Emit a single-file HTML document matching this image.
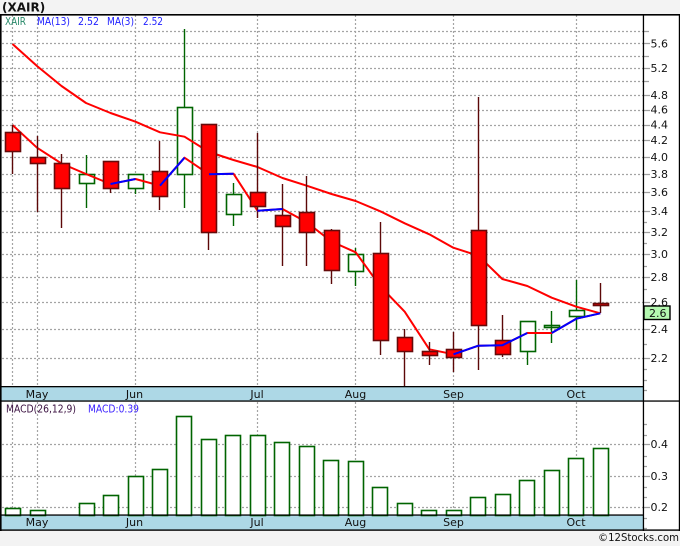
<!DOCTYPE html>
<html><head><meta charset="utf-8"><style>
html,body{margin:0;padding:0;background:#f3f3f3}
svg{display:block}
text{font-family:"DejaVu Sans",sans-serif;font-size:11px;fill:#111}
.g{stroke:#a4a4a4;stroke-width:1.2;stroke-dasharray:2 2;fill:none}
.t{stroke:#a0a0a0;stroke-width:1.2}
.rw{stroke:#5c0808;stroke-width:1.4}
.gw{stroke:#006400;stroke-width:1.4}
.rb{fill:#f00;stroke:#660a0a;stroke-width:1.6}
.gb{fill:none;stroke:#006400;stroke-width:1.6}
.mb{fill:#fff;stroke:#006400;stroke-width:1.6}
.rl{fill:none;stroke:#f00;stroke-width:2;stroke-linejoin:round}
.bl{fill:none;stroke:#00f;stroke-width:2;stroke-linejoin:round}
.lg{font-size:10.4px;fill:#22f}
</style></head><body>
<svg width="680" height="546" viewBox="0 0 680 546" xmlns="http://www.w3.org/2000/svg">
<rect width="680" height="546" fill="#f3f3f3"/>
<text x="2" y="11.5" style="font-weight:bold;font-size:12px;fill:#111">(XAIR)</text>
<rect x="1" y="15" width="678" height="515" fill="#fff"/>

<!-- bands -->
<rect x="1" y="387" width="642" height="14" fill="#add8e6"/>
<rect x="1" y="515" width="642" height="15" fill="#add8e6"/>

<!-- grid upper -->
<path class="g" d="M2 31.5H643M2 43.5H643M2 56.5H643M2 68.5H643M2 81.5H643M2 95.5H643M2 110.5H643M2 125.5H643M2 140.5H643M2 157.5H643M2 174.5H643M2 192.5H643M2 211.5H643M2 232.5H643M2 254.5H643M2 277.5H643M2 302.5H643M2 329.5H643M2 358.5H643"/>
<path class="g" d="M12.5 15V387M37.5 15V387M135.5 15V387M257.5 15V387M355.5 15V387M453.5 15V387M576.5 15V387"/>
<!-- grid lower -->
<path class="g" d="M2 444.5H643M2 476.5H643M2 507.5H643"/>
<path class="g" d="M12.5 402V515M37.5 402V515M135.5 402V515M257.5 402V515M355.5 402V515M453.5 402V515M576.5 402V515"/>

<!-- ticks -->
<path class="t" d="M643 31.5H649M643 43.5H650M643 56.5H649M643 68.5H650M643 81.5H649M643 95.5H650M643 110.5H650M643 125.5H650M643 140.5H650M643 157.5H650M643 174.5H650M643 192.5H650M643 211.5H650M643 222.5H647M643 232.5H650M643 243.5H647M643 254.5H650M643 266.5H647M643 277.5H650M643 289.5H647M643 302.5H650M643 329.5H650M643 344.5H647M643 358.5H650M643 369.5H647M643 380.5H647M643 390.5H647"/>
<path class="t" d="M643 424.5H647M643 435.5H647M643 444.5H650M643 456.5H647M643 466.5H647M643 476.5H650M643 487.5H647M643 497.5H647M643 507.5H650M643 518.5H647M643 528.5H647"/>

<!-- wicks green -->
<path class="gw" d="M86.5 155V208M135.5 174V194M184.5 29V208M233.5 183V226M355.5 248V286M527.5 351V365M551.5 311V343M576.5 280V330"/>
<!-- hollow bodies -->
<rect x="178" y="108" width="14" height="66" fill="#fff"/>
<rect x="80" y="175" width="14" height="8" fill="#fff"/>
<rect x="129" y="175" width="14" height="13" fill="#fff"/>
<rect x="227" y="195" width="14" height="19" fill="#fff"/>
<rect x="349" y="255" width="14" height="16" fill="#fff"/>
<rect x="521" y="322" width="14" height="29" fill="#fff"/>
<rect x="570" y="311" width="14" height="5" fill="#fff"/>
<rect class="gb" x="79.5" y="174.5" width="15" height="9"/>
<rect class="gb" x="128.5" y="174.5" width="15" height="14"/>
<rect class="gb" x="177.5" y="107.5" width="15" height="67"/>
<rect class="gb" x="226.5" y="194.5" width="15" height="20"/>
<rect class="gb" x="348.5" y="254.5" width="15" height="17"/>
<rect class="gb" x="520.5" y="321.5" width="15" height="30"/>
<rect class="gb" x="544.5" y="325.5" width="15" height="2"/>
<rect class="gb" x="569.5" y="310.5" width="15" height="6"/>

<!-- MA lines red -->
<polyline class="rl" points="12.5,44 37,66 61.5,86 86,103 110.5,113 135.5,121.7 160,132.3 184.5,136.7 209,152 233.5,160 257.5,167 282.5,178 306.7,185.7 331.5,194 355.7,201 380.3,211.3 404.7,223.3 429.3,234.3 453.3,247.7 478.3,255.7 502.3,279 527.3,286 551.7,297.7 576.3,306.7 600.3,313.3"/>
<polyline class="rl" points="12.5,125 37,147.7 61.5,163.5 86,174 110.5,184 135.5,179 160,185.7 184.5,157.7 209,174.3 233.5,173.7 257.5,210.7 282.5,209 306.7,222.3 331.5,241.5 355.7,252.3 380.3,286.3 404.7,311.7 429.3,349.3 453.5,354.3 478.3,345.7 502.3,345.3 527.3,333 551.7,333 576.3,318.7 600.3,313.3"/>

<!-- wicks red -->
<path class="rw" d="M12.5 125V174M37.5 136V212M61.5 154V228M110.5 161V193M159.5 141V210M208.5 124V250M257.5 133V218M282.5 184V266M306.5 176V266M331.5 229V284M380.5 222V355M404.5 329V387M429.5 342V365M453.5 332V372M478.5 97V370M502.5 315V357M600.5 283V313"/>
<!-- red bodies -->
<rect class="rb" x="5.5" y="132.5" width="15" height="19"/>
<rect class="rb" x="30.5" y="157.5" width="15" height="6"/>
<rect class="rb" x="54.5" y="163.5" width="15" height="25"/>
<rect class="rb" x="103.5" y="161.5" width="15" height="27"/>
<rect class="rb" x="152.5" y="171.5" width="15" height="25"/>
<rect class="rb" x="201.5" y="124.5" width="15" height="108"/>
<rect class="rb" x="250.5" y="192.5" width="15" height="14"/>
<rect class="rb" x="275.5" y="215.5" width="15" height="11"/>
<rect class="rb" x="299.5" y="212.5" width="15" height="20"/>
<rect class="rb" x="324.5" y="230.5" width="15" height="40"/>
<rect class="rb" x="373.5" y="253.5" width="15" height="87"/>
<rect class="rb" x="397.5" y="337.5" width="15" height="14"/>
<rect class="rb" x="422.5" y="351.5" width="15" height="4"/>
<rect class="rb" x="446.5" y="349.5" width="15" height="8"/>
<rect class="rb" x="471.5" y="230.5" width="15" height="95"/>
<rect class="rb" x="495.5" y="340.5" width="15" height="14"/>
<rect class="rb" x="593.5" y="303.5" width="15" height="2"/>

<!-- blue segments -->
<polyline class="bl" points="110.5,184 135.5,179"/>
<polyline class="bl" points="160,185.7 184.5,157.7"/>
<polyline class="bl" points="209,174.3 233.5,173.7"/>
<polyline class="bl" points="257.5,210.7 282.5,209"/>
<polyline class="bl" points="453.5,354.3 478.3,345.7 502.3,345.3 527.3,333"/>
<polyline class="bl" points="551.7,333 576.3,318.7 600.3,313.3"/>

<!-- MACD bars -->
<rect class="mb" x="5.5" y="508.5" width="15" height="7"/>
<rect class="mb" x="30.5" y="510.5" width="15" height="5"/>
<rect class="mb" x="79.5" y="503.5" width="15" height="12"/>
<rect class="mb" x="103.5" y="495.5" width="15" height="20"/>
<rect class="mb" x="128.5" y="476.5" width="15" height="39"/>
<rect class="mb" x="152.5" y="469.5" width="15" height="46"/>
<rect class="mb" x="176.5" y="416.5" width="15" height="99"/>
<rect class="mb" x="201.5" y="439.5" width="15" height="76"/>
<rect class="mb" x="225.5" y="435.5" width="15" height="80"/>
<rect class="mb" x="250.5" y="435.5" width="15" height="80"/>
<rect class="mb" x="274.5" y="442.5" width="15" height="73"/>
<rect class="mb" x="299.5" y="446.5" width="15" height="69"/>
<rect class="mb" x="323.5" y="460.5" width="15" height="55"/>
<rect class="mb" x="348.5" y="461.5" width="15" height="54"/>
<rect class="mb" x="372.5" y="487.5" width="15" height="28"/>
<rect class="mb" x="397.5" y="503.5" width="15" height="12"/>
<rect class="mb" x="421.5" y="510.5" width="15" height="5"/>
<rect class="mb" x="446.5" y="510.5" width="15" height="5"/>
<rect class="mb" x="470.5" y="497.5" width="15" height="18"/>
<rect class="mb" x="495.5" y="494.5" width="15" height="21"/>
<rect class="mb" x="519.5" y="480.5" width="15" height="35"/>
<rect class="mb" x="544.5" y="470.5" width="15" height="45"/>
<rect class="mb" x="568.5" y="458.5" width="15" height="57"/>
<rect class="mb" x="593.5" y="448.5" width="15" height="67"/>

<!-- frame lines -->
<rect x="0" y="14" width="680" height="1.6" fill="#000"/>
<rect x="0" y="14" width="1.6" height="517" fill="#000"/>
<rect x="678.8" y="14" width="1.2" height="517" fill="#000"/>
<rect x="642.8" y="14" width="1.3" height="517" fill="#000"/>
<rect x="0" y="386" width="644" height="1.3" fill="#000"/>
<rect x="0" y="400.4" width="680" height="1.3" fill="#000"/>
<rect x="0" y="514.4" width="644" height="1.3" fill="#000"/>
<rect x="0" y="529.4" width="680" height="1.4" fill="#000"/>

<!-- legend -->
<text class="lg" x="5" y="25" style="fill:#2a8a6a" textLength="21" lengthAdjust="spacingAndGlyphs">XAIR</text>
<text class="lg" x="37" y="25" textLength="33" lengthAdjust="spacingAndGlyphs">MA(13)</text>
<text class="lg" x="78" y="25" textLength="21" lengthAdjust="spacingAndGlyphs">2.52</text>
<text class="lg" x="107" y="25" textLength="27" lengthAdjust="spacingAndGlyphs">MA(3)</text>
<text class="lg" x="143" y="25" textLength="20" lengthAdjust="spacingAndGlyphs">2.52</text>
<text class="lg" x="6" y="412.5" style="fill:#3a1040" textLength="70" lengthAdjust="spacingAndGlyphs">MACD(26,12,9)</text>
<text class="lg" x="88" y="412.5" style="fill:#3a20ff" textLength="51" lengthAdjust="spacingAndGlyphs">MACD:0.39</text>

<!-- axis labels -->
<g>
<text x="650.5" y="47.5">5.6</text>
<text x="650.5" y="72">5.2</text>
<text x="650.5" y="99">4.8</text>
<text x="650.5" y="113.5">4.6</text>
<text x="650.5" y="128.5">4.4</text>
<text x="650.5" y="144">4.2</text>
<text x="650.5" y="161">4.0</text>
<text x="650.5" y="178">3.8</text>
<text x="650.5" y="196">3.6</text>
<text x="650.5" y="215">3.4</text>
<text x="650.5" y="236">3.2</text>
<text x="650.5" y="258">3.0</text>
<text x="650.5" y="281">2.8</text>
<text x="650.5" y="306">2.6</text>
<text x="650.5" y="333">2.4</text>
<text x="650.5" y="362">2.2</text>
<text x="650.5" y="448">0.4</text>
<text x="650.5" y="480">0.3</text>
<text x="650.5" y="511">0.2</text>
</g>
<rect x="644" y="306" width="26" height="13.5" fill="#b4f8b0" stroke="#000" stroke-width="1.4"/>
<text x="649" y="317">2.6</text>

<!-- month labels -->
<g text-anchor="middle">
<text x="37" y="398">May</text><text x="134.5" y="398">Jun</text><text x="257" y="398">Jul</text><text x="355.5" y="398">Aug</text><text x="453.5" y="398">Sep</text><text x="576" y="398">Oct</text>
<text x="37" y="526">May</text><text x="134.5" y="526">Jun</text><text x="257" y="526">Jul</text><text x="355.5" y="526">Aug</text><text x="453.5" y="526">Sep</text><text x="576" y="526">Oct</text>
</g>
<text x="598" y="541" style="font-size:11px" textLength="81" lengthAdjust="spacingAndGlyphs">©12Stocks.com</text>
</svg>
</body></html>
